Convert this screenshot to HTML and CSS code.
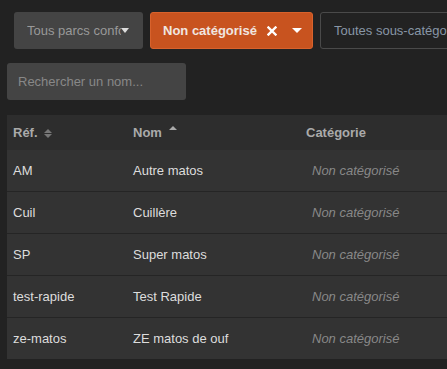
FILE: index.html
```html
<!DOCTYPE html>
<html lang="fr">
<head>
    <meta charset="UTF-8">
    <meta name="viewport" content="width=device-width, initial-scale=1.0">
    <title>Matériel</title>
    <link rel="stylesheet" href="styles.css">
</head>
<body>

<div class="page">
    <div class="filters">
        <div class="select">
            <span class="select-label">Tous parcs confondus</span>
            <span class="caret"></span>
        </div>
        <div class="select active">
            <span class="select-label">Non catégorisé</span>
            <svg class="clear" width="10" height="10" viewBox="0 0 10 10">
                <path d="M1.5 1.5 L8.5 8.5 M8.5 1.5 L1.5 8.5" stroke="#fff" stroke-width="2.4" stroke-linecap="square"/>
            </svg>
            <span class="caret"></span>
        </div>
        <div class="select outline">
            <span class="select-label">Toutes sous-catégories</span>
        </div>
    </div>

    <div class="search">
        <input type="text" placeholder="Rechercher un nom...">
    </div>

    <table class="items">
        <thead>
            <tr>
                <th class="col-ref">Réf. <span class="sort both"></span></th>
                <th class="col-name">Nom <span class="sort up"></span></th>
                <th class="col-cat">Catégorie</th>
            </tr>
        </thead>
        <tbody>
            <tr><td>AM</td><td>Autre matos</td><td class="muted">Non catégorisé</td></tr>
            <tr><td>Cuil</td><td>Cuillère</td><td class="muted">Non catégorisé</td></tr>
            <tr><td>SP</td><td>Super matos</td><td class="muted">Non catégorisé</td></tr>
            <tr><td>test-rapide</td><td>Test Rapide</td><td class="muted">Non catégorisé</td></tr>
            <tr><td>ze-matos</td><td>ZE matos de ouf</td><td class="muted">Non catégorisé</td></tr>
        </tbody>
    </table>
</div>

</body>
</html>
```

FILE: styles.css
```css
/* Dark theme list page */
body {
    font-family: "Liberation Sans", Arial, sans-serif;
    font-size: 13px;
    background-color: #222;
    color: #ddd;
    margin: 0;
    overflow: hidden;
}
.page {
    padding: 12px 0 0 7px;
    width: 560px;
}
.filters {
    display: flex;
    gap: 7px;
    margin-left: 7px;
}
.select {
    display: flex;
    align-items: center;
    flex: none;
    height: 37px;
    box-sizing: border-box;
    background-color: #444;
    border-radius: 3px;
    color: #999;
    padding: 0 14px 0 13px;
    width: 129px;
    white-space: nowrap;
}
.select-label {
    overflow: hidden;
    flex: 1;
}
.caret {
    flex: none;
    width: 0;
    height: 0;
    border-left: 4px solid transparent;
    border-right: 4px solid transparent;
    border-top: 5px solid #ddd;
}
.select.active {
    background-color: #c8531f;
    color: #f0e6e0;
    font-weight: bold;
    width: 163px;
    padding: 0 11px 0 12px;
    border: 1px solid #d8622c;
}
.select.active .select-label {
    flex: none;
}
.clear {
    flex: none;
    margin-left: 10px;
    margin-right: 15px;
}
.select.active .caret {
    border-top-color: #fff;
    border-left-width: 5px;
    border-right-width: 5px;
}
.select.outline {
    background-color: transparent;
    border: 1px solid #4a4a4a;
    color: #8896a6;
    width: 200px;
}
.search {
    margin-top: 14px;
}
.search input {
    width: 179px;
    height: 37px;
    box-sizing: border-box;
    background-color: #444;
    border: none;
    border-radius: 3px;
    padding: 0 11px;
    font-family: inherit;
    font-size: 13px;
    color: #ddd;
}
.search input::placeholder {
    color: #888;
}
.items {
    margin-top: 15px;
    width: 100%;
    border-collapse: collapse;
}
th, td {
    text-align: left;
    padding: 0 6px;
}
th {
    background-color: #2d2d2d;
    color: #aaa;
    height: 35px;
}
td {
    background-color: #333;
    height: 41px;
    border-top: 1px solid #252525;
}
tbody tr:first-child td {
    border-top: none;
}
.col-ref { width: 108px; }
.col-name { width: 156px; }
.col-cat { padding-left: 11px; }
td.muted {
    color: #888;
    font-style: italic;
    padding-left: 17px;
}
.sort {
    display: inline-block;
    position: relative;
    width: 8px;
    height: 10px;
    vertical-align: middle;
    margin-left: 3px;
}
.sort::before,
.sort::after {
    content: "";
    position: absolute;
    left: 0;
    border-left: 4px solid transparent;
    border-right: 4px solid transparent;
}
.sort.both::before {
    top: 0;
    border-bottom: 4px solid #777;
}
.sort.both::after {
    top: 5px;
    border-top: 4px solid #777;
}
.sort.up::before {
    top: -3px;
    border-bottom: 4px solid #aaa;
}
```
